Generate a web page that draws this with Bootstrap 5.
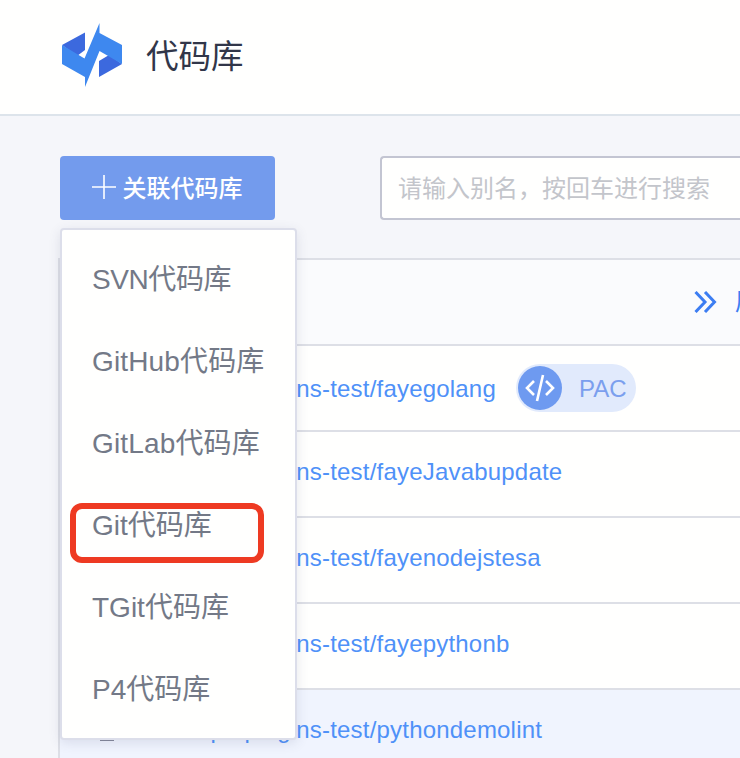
<!DOCTYPE html>
<html lang="zh-CN">
<head>
<meta charset="utf-8">
<meta name="viewport" content="width=device-width, initial-scale=1">
<title>代码库</title>
<link rel="stylesheet" href="https://cdn.jsdelivr.net/npm/bootstrap@5.3.0/dist/css/bootstrap.min.css">
<style>
body{font-family:"Liberation Sans","Noto Sans CJK SC",sans-serif;background:#f5f6fa;height:758px;overflow:hidden;line-height:1}
.topbar{height:116px;background:#fffffe;border-bottom:2px solid #dde4eb;padding:0 60px 4px}
.topbar h1{font-size:32.500px;font-weight:400;color:#313649;margin:0 0 0 22px;padding-top:4px}
.tools{height:142px;padding:40px 0 0 60px;gap:105px}
.link-repo{width:215px;height:64px;background:#739bed;color:#fff;font-size:24px;font-weight:500;border:0;border-radius:4px;line-height:1;gap:6px;padding:0 2px 0 0}
.link-repo:hover{background:#739bed;color:#fff}
.link-repo span{padding-top:2px}
.link-repo svg{margin-bottom:2px}
.search{height:64px;border:2px solid #c3c5d2;border-right:0;border-radius:4px 0 0 4px;font-size:24px;padding:2px 16px 0;background:#fffffe;width:360px}
.search::placeholder{color:#c3c5cb;opacity:1}
.repos{margin-left:58px;border:2px solid #dddfe6;border-width:2px 0 0 2px;height:500px;overflow:hidden}
.repo-head{height:84px;background:#fafbfd;padding-left:634px;color:#3c7df2;font-size:24px;gap:18px;overflow:hidden;white-space:nowrap}
.repo-head svg{flex:none}
.repo{height:86px;border-top:2px solid #dddfe6;background:#fffffe;padding:0 0 4px 72px;font-size:24px;color:#4f91f8;white-space:nowrap}
.repo a{color:inherit;text-decoration:none;letter-spacing:.2px}
.repo.with-pac{padding-bottom:0}
.repo.with-pac a{padding-top:2px}
.repo.active{background:#f0f4fe;padding-left:40px}
.host-icon{width:14px;margin-right:18px;margin-top:20px}
.pac{width:120px;height:48px;background:#e1eafc;color:#7b9fee;margin-left:20px;padding-left:2px;gap:17px}
.pac i{width:44px;height:44px;background:#6e9af0}
.pac>span{padding-top:1px}
.repo-menu{left:60px;top:228px;width:237px;height:512px;border:2px solid #dcdeea;border-radius:4px;background:#fffffe;box-shadow:0 3px 12px rgba(60,70,110,.13);padding:9px 0 7px;min-width:0;margin:0;z-index:5}
.repo-menu .dropdown-item{height:82px;padding:0 30px;font-size:28px;line-height:82px;color:#737987}
.repo-menu .tight{letter-spacing:-.4px}
.repo-menu .loose{letter-spacing:.15px}
.callout{left:70px;top:503px;width:194px;height:60px;border:6px solid #ee3a22;border-radius:12px;z-index:6}
</style>
<script defer src="https://cdn.jsdelivr.net/npm/bootstrap@5.3.0/dist/js/bootstrap.bundle.min.js"></script>
</head>
<body class="position-relative">
<header class="topbar d-flex align-items-center">
  <svg width="64" height="66" viewBox="60 22 64 66" aria-hidden="true">
    <path fill="#3c69de" d="M62 45 85 32.500V50L77 56zM122 64 99 77V61L109 55z"/>
    <path fill="#3e88ef" d="M62 45 84.500 58.500 99.500 23V33L122 45V64L99.500 51 85 87V77L62 64z"/>
  </svg>
  <h1>代码库</h1>
</header>
<section class="tools d-flex">
  <button class="btn link-repo d-flex align-items-center justify-content-center flex-shrink-0" type="button">
    <svg width="26" height="26" viewBox="0 0 26 26" stroke="#fff" stroke-width="1.600"><path d="M13 1v24M1 13h24"/></svg><span>关联代码库</span>
  </button>
  <input class="form-control search flex-shrink-0" type="text" placeholder="请输入别名，按回车进行搜索">
</section>
<main class="repos">
  <div class="repo-head d-flex align-items-center">
    <svg width="23" height="22" viewBox="0 0 23 22" fill="none" stroke="#3c7df2" stroke-width="3"><path d="M1.500 1 11 11 1.500 21M11 1l9.500 10L11 21"/></svg><span>展开</span>
  </div>
  <div class="repo with-pac d-flex align-items-center"><a href="#">bkdevops-plugins-test/fayegolang</a>
    <span class="pac rounded-pill d-flex align-items-center"><i class="rounded-circle d-flex align-items-center justify-content-center"><svg width="30" height="28" viewBox="0 0 30 28" fill="none" stroke="#fff" stroke-width="2.600"><path d="M9 7 2 14l7 7M21 7l7 7-7 7M18 1 12 27"/></svg></i><span>PAC</span></span>
  </div>
  <div class="repo d-flex align-items-center"><a href="#">bkdevops-plugins-test/fayeJavabupdate</a></div>
  <div class="repo d-flex align-items-center"><a href="#">bkdevops-plugins-test/fayenodejstesa</a></div>
  <div class="repo d-flex align-items-center"><a href="#">bkdevops-plugins-test/fayepythonb</a></div>
  <div class="repo active d-flex align-items-center"><svg class="host-icon" height="2" viewBox="0 0 14 2"><path fill="#85889b" d="M0 0h14v2H0z"/></svg><a href="#">bkdevops-plugins-test/pythondemolint</a></div>
</main>
<div class="dropdown-menu repo-menu d-block position-absolute">
  <a class="dropdown-item tight" href="#">SVN代码库</a>
  <a class="dropdown-item loose" href="#">GitHub代码库</a>
  <a class="dropdown-item loose" href="#">GitLab代码库</a>
  <a class="dropdown-item" href="#">Git代码库</a>
  <a class="dropdown-item" href="#">TGit代码库</a>
  <a class="dropdown-item" href="#">P4代码库</a>
</div>
<div class="callout position-absolute"></div>
</body>
</html>
